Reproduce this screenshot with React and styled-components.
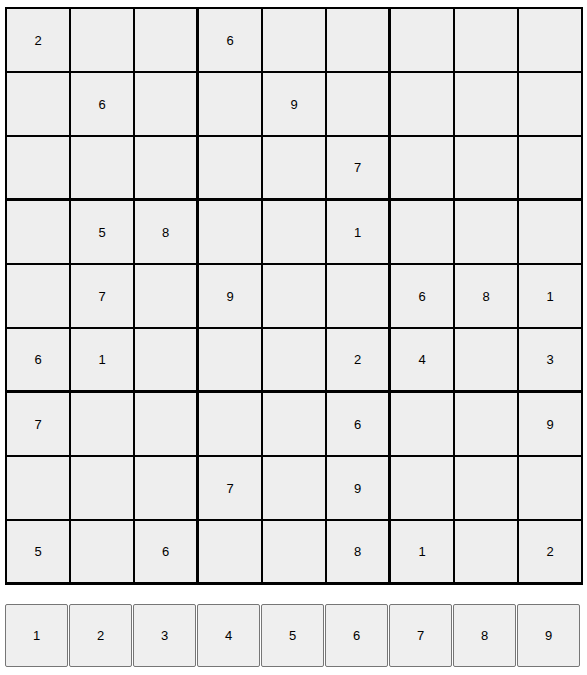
import React from "react";
import styled, { createGlobalStyle } from "styled-components";

const puzzle = [
  "2..6.....",
  ".6..9....",
  ".....7...",
  ".58..1...",
  ".7.9..681",
  "61...24.3",
  "7....6..9",
  "...7.9...",
  "5.6..81.2",
];

const App = () => {
  return (
    <Page>
      <GlobalStyle />
      <Board>
        {puzzle.map((row, r) =>
          row.split("").map((ch, c) => (
            <Cell
              key={`${r}-${c}`}
              $boxRight={c === 2 || c === 5}
              $boxBottom={r === 2 || r === 5 || r === 8}
            >
              {ch === "." ? "" : ch}
            </Cell>
          ))
        )}
      </Board>
      <Pad>
        {[1, 2, 3, 4, 5, 6, 7, 8, 9].map((n) => (
          <PadButton key={n}>{n}</PadButton>
        ))}
      </Pad>
    </Page>
  );
};

const GlobalStyle = createGlobalStyle`
  body {
    margin: 0;
    font-family: "Liberation Sans", Arial, sans-serif;
    background: #fff;
  }
`;

const Page = styled.div`
  padding: 7px 0 0 5px;
`;

//
//Board
//
const Board = styled.div`
  display: grid;
  grid-template-columns: repeat(9, 64px);
  width: max-content;
  border-left: 2px solid #000;
  border-top: 2px solid #000;
`;

const Cell = styled.div`
  box-sizing: border-box;
  width: 64px;
  height: 64px;
  display: flex;
  align-items: center;
  justify-content: center;
  background: #eeeeee;
  color: #000;
  font-size: 13px;
  border-right: ${(p) => (p.$boxRight ? "3px" : "2px")} solid #000;
  border-bottom: ${(p) => (p.$boxBottom ? "3px" : "2px")} solid #000;
`;

//
//Number pad
//
const Pad = styled.div`
  display: flex;
  gap: 1px;
  margin-top: 19px;
`;

const PadButton = styled.button`
  box-sizing: border-box;
  width: 63px;
  height: 63px;
  padding: 0;
  background: #efefef;
  border: 1px solid #767676;
  border-radius: 2px;
  color: #000;
  font-family: "Liberation Sans", Arial, sans-serif;
  font-size: 13px;
`;

export default App;
